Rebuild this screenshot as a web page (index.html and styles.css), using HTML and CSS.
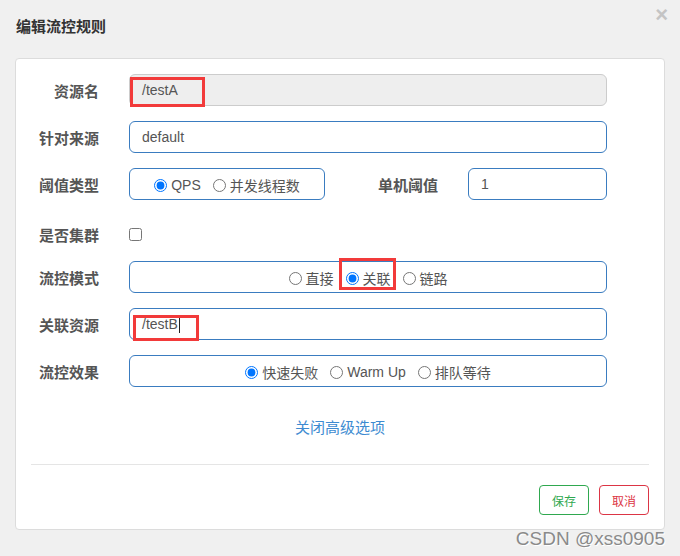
FILE: index.html
```html
<!DOCTYPE html>
<html lang="zh-CN">
<head>
<meta charset="utf-8">
<title>编辑流控规则</title>
<link rel="stylesheet" href="styles.css">
</head>
<body>
<div class="modal">
  <div class="modal-header">
    <h4 class="title">编辑流控规则</h4>
    <span class="close">×</span>
  </div>
  <div class="card">
    <div class="row">
      <label class="label">资源名</label>
      <div class="field input disabled">/testA<span class="mark mark-a"></span></div>
    </div>
    <div class="row">
      <label class="label">针对来源</label>
      <div class="field input">default</div>
    </div>
    <div class="row">
      <label class="label">阈值类型</label>
      <div class="radio-box small">
        <label class="opt"><input type="radio" name="grade" checked>QPS</label>
        <label class="opt"><input type="radio" name="grade">并发线程数</label>
      </div>
      <label class="label label-mid">单机阈值</label>
      <div class="input count">1</div>
    </div>
    <div class="row row-check">
      <label class="label">是否集群</label>
      <input type="checkbox" class="check">
    </div>
    <div class="row">
      <label class="label">流控模式</label>
      <div class="radio-box field">
        <label class="opt"><input type="radio" name="mode">直接</label>
        <label class="opt marked"><input type="radio" name="mode" checked>关联<span class="mark mark-b"></span></label>
        <label class="opt"><input type="radio" name="mode">链路</label>
      </div>
    </div>
    <div class="row">
      <label class="label">关联资源</label>
      <div class="field input">/testB<span class="caret"></span><span class="mark mark-c"></span></div>
    </div>
    <div class="row">
      <label class="label">流控效果</label>
      <div class="radio-box field">
        <label class="opt"><input type="radio" name="effect" checked>快速失败</label>
        <label class="opt"><input type="radio" name="effect">Warm Up</label>
        <label class="opt"><input type="radio" name="effect">排队等待</label>
      </div>
    </div>
    <div class="link-row"><a class="link">关闭高级选项</a></div>
    <hr class="divider">
    <div class="actions">
      <button class="btn btn-save">保存</button>
      <button class="btn btn-cancel">取消</button>
    </div>
  </div>
  <div class="watermark">CSDN @xss0905</div>
</div>
</body>
</html>
```

FILE: styles.css
```css
* { box-sizing: border-box; }
html, body { margin: 0; padding: 0; }
body {
  background: #f0f0f0;
  font-family: "Liberation Sans", "Noto Sans CJK SC", sans-serif;
  font-size: 14px;
  color: #555;
  width: 680px;
  height: 556px;
  overflow: hidden;
}
.modal { position: relative; height: 556px; }
.modal-header {
  position: relative;
  height: 58px;
  padding: 17px 16px 0;
}
.title {
  margin: 0;
  font-size: 15px;
  line-height: 20px;
  font-weight: bold;
  color: #333;
}
.close {
  position: absolute;
  top: 2px;
  right: 12px;
  font-size: 22px;
  font-weight: bold;
  color: #c4c4c4;
  line-height: 26px;
}
.card {
  margin: 0 15px;
  background: #fff;
  border: 1px solid #dcdcdc;
  border-radius: 4px;
  padding: 15px 15px 13px;
  height: 472px;
}
.row {
  display: flex;
  align-items: center;
  height: 32px;
  margin-bottom: 15px;
}
.row-check { margin-top: 18px; margin-bottom: 11px; }
.label {
  width: 83px;
  padding-right: 15px;
  text-align: right;
  font-size: 15px;
  font-weight: bold;
  color: #555;
  flex: none;
  margin-right: 15px;
  line-height: 20px;
  padding-top: 3px;
}
.label-mid { width: 128px; margin-right: 15px; }
.input {
  position: relative;
  height: 32px;
  border: 1px solid #3a7cc0;
  border-radius: 6px;
  padding: 0 12px;
  display: flex;
  align-items: center;
  color: #555;
  font-size: 14px;
}
.field { width: 478px; flex: none; }
.disabled { background: #eee; border-color: #ccc; }
.count { width: 139px; }
.radio-box {
  position: relative;
  height: 32px;
  border: 1px solid #3a7cc0;
  border-radius: 6px;
  display: flex;
  align-items: center;
  justify-content: center;
  gap: 12px;
  color: #555;
  padding-top: 2px;
}
.radio-box.small { width: 196px; }
.opt {
  position: relative;
  display: inline-flex;
  align-items: center;
  gap: 4px;
  font-size: 14px;
}
.opt input { margin: 0; width: 13px; height: 13px; }
.check { margin: 0; width: 13px; height: 13px; }
.mark {
  position: absolute;
  border: 3px solid #f23a3a;
  pointer-events: none;
}
.mark-a { left: 0; top: 2px; width: 75px; height: 30px; }
.mark-b { left: -7px; top: -10px; width: 57px; height: 32px; }
.mark-c { left: 3px; top: 6px; width: 66px; height: 26px; }
.caret {
  display: inline-block;
  width: 1px;
  height: 17px;
  background: #222;
  margin-left: 1px;
}
.link-row {
  text-align: center;
  margin-top: 31px;
  line-height: 20px;
}
.link {
  color: #3d8bd1;
  font-size: 15px;
}
.divider {
  margin: 26px 0 0;
  border: 0;
  border-top: 1px solid #e5e5e5;
}
.actions {
  display: flex;
  justify-content: flex-end;
  gap: 10px;
  margin-top: 20px;
}
.btn {
  width: 50px;
  height: 30px;
  background: #fff;
  border-radius: 4px;
  font-family: "Liberation Sans", "Noto Sans CJK SC", sans-serif;
  font-size: 12px;
  padding: 0;
}
.btn-save { border: 1px solid #2fa84f; color: #2fa84f; }
.btn-cancel { border: 1px solid #dc3545; color: #dc3545; }
.watermark {
  position: absolute;
  right: 15px;
  top: 527px;
  font-family: "Liberation Sans", sans-serif;
  font-size: 19px;
  color: #8a8a8a;
  text-shadow: 1px 1px 0 #fff;
  line-height: 24px;
}
```
